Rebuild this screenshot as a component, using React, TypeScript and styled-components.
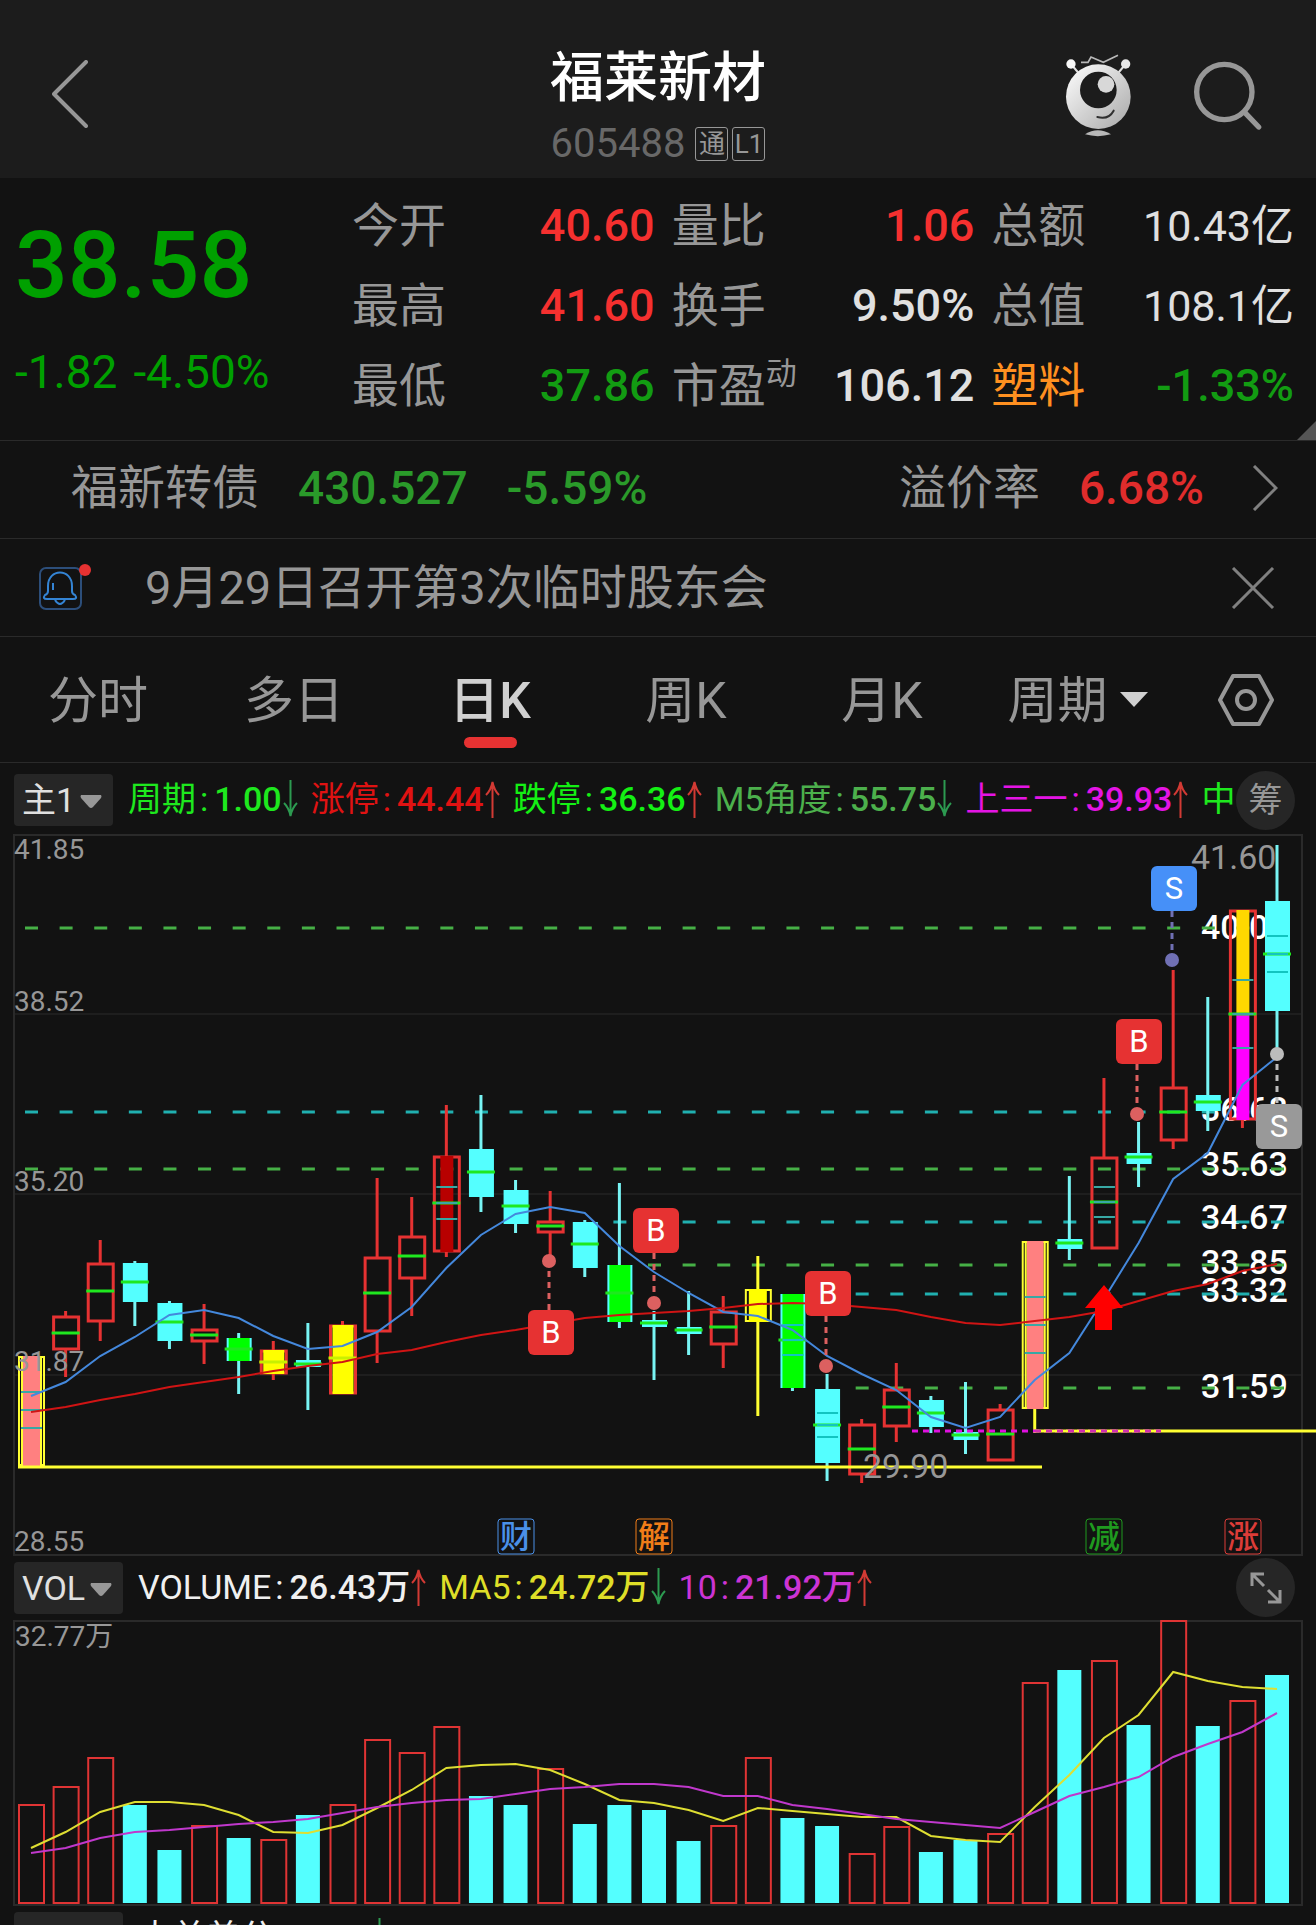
import React from "react";
import styled, { createGlobalStyle } from "styled-components";

const GlobalStyle = createGlobalStyle`
  *, *::before, *::after { box-sizing: border-box; }
  body {
    margin: 0;
    background: #121212;
    color: #e0e0e0;
    font-family: Roboto, "Noto Sans CJK SC", sans-serif;
  }
  h1, p, dl, dd, dt { margin: 0; font-weight: 400; }
  button, select {
    margin: 0;
    padding: 0;
    border: 0;
    background: none;
    color: inherit;
    font: inherit;
    cursor: pointer;
  }
  svg { display: block; }
`;

const color = {
  up: "#f5302f",
  down: "#129c12",
  text: "#e0e0e0",
  muted: "#979797",
  line: "#2a2a2a",
  raised: "#262626",
  accent: "#e63232",
};

/* ---------- page frame ---------- */

const Page = styled.main`
  height: 100vh;
  overflow: hidden;
  background: #121212;
`;

const Header = styled.header`
  display: grid;
  grid-template-columns: 1fr auto 1fr;
  align-items: center;
  height: 178px;
  padding: 14px 52px 0;
  background: #1c1c1c;
`;

const IconButton = styled.button`
  display: inline-flex;
  align-items: center;
  justify-content: center;
  color: ${color.muted};
`;

const HeaderActions = styled.div`
  display: flex;
  align-items: center;
  justify-content: flex-end;
  gap: 58px;
`;

const TitleBlock = styled.div`
  display: flex;
  flex-direction: column;
  align-items: center;
  gap: 14px;
  padding-top: 20px;
`;

const Title = styled.h1`
  font-size: 54px;
  line-height: 62px;
  font-weight: 500;
  color: #fff;
`;

const CodeLine = styled.div`
  display: flex;
  align-items: center;
  gap: 4px;
  height: 40px;
`;

const Code = styled.span`
  margin-right: 6px;
  font-size: 40px;
  line-height: 40px;
  color: #686868;
`;

const Badge = styled.span`
  width: 33px;
  height: 34px;
  border: 1px solid ${color.muted};
  border-radius: 3px;
  font-size: 26px;
  line-height: 32px;
  text-align: center;
  color: ${color.muted};
`;

/* ---------- quote ---------- */

const Quote = styled.section`
  position: relative;
  display: grid;
  grid-template-columns: 337px 1fr;
  height: 263px;
  padding: 8px 22px 0 15px;
  border-bottom: 1px solid ${color.line};
`;

const CornerFold = styled.svg`
  position: absolute;
  right: 0;
  bottom: 0;
  fill: #555;
`;

const PriceBlock = styled.div`
  padding-top: 25px;
  color: #00a000;
`;

const Price = styled.p`
  font-size: 93px;
  line-height: 110px;
  font-weight: 500;
`;

const Change = styled.p`
  display: flex;
  gap: 16px;
  margin-top: 25px;
  font-size: 46px;
  line-height: 52px;
`;

const Stats = styled.dl`
  display: grid;
  grid-template-columns: repeat(3, 1fr);
  grid-auto-rows: 80px;
  column-gap: 17px;
`;

const Stat = styled.div`
  display: flex;
  align-items: center;
  justify-content: space-between;
  height: 80px;
  white-space: nowrap;
`;

const StatLabel = styled.dt<{ $tone?: string }>`
  font-size: 47px;
  line-height: 60px;
  color: ${(p) => p.$tone ?? color.muted};

  sup {
    font-size: 31px;
    line-height: 31px;
    vertical-align: 18px;
  }
`;

const StatValue = styled.dd<{ $tone?: string; $compact?: boolean }>`
  font-size: ${(p) => (p.$compact ? 43 : 45)}px;
  line-height: 60px;
  font-weight: ${(p) => (p.$compact ? 400 : 500)};
  color: ${(p) => p.$tone ?? color.text};
`;

/* ---------- bond and notice rows ---------- */

const InfoRow = styled.section<{ $left: number; $lift?: boolean }>`
  display: flex;
  align-items: center;
  height: 98px;
  padding: 0 38px ${(p) => (p.$lift ? 4 : 0)}px ${(p) => p.$left}px;
  border-bottom: 1px solid ${color.line};
  font-size: 47px;
  line-height: 60px;
  color: ${color.muted};
  white-space: nowrap;
`;

const Figure = styled.span<{ $tone: string }>`
  margin-left: 39px;
  font-size: 46px;
  font-weight: 500;
  color: ${(p) => p.$tone};
`;

const RowEnd = styled.div`
  display: flex;
  align-items: center;
  gap: 48px;
  margin-left: auto;
`;

const NoticeText = styled.span`
  margin-left: 52px;
`;

/* ---------- period tabs ---------- */

const Tabs = styled.nav`
  display: grid;
  grid-template-columns: repeat(6, 1fr) 140px;
  align-items: center;
  justify-items: center;
  height: 126px;
  border-bottom: 1px solid ${color.line};
`;

const Tab = styled.button<{ $active?: boolean }>`
  display: flex;
  flex-direction: column;
  align-items: center;
  height: 96px;
  font-size: 50px;
  line-height: 98px;
  font-weight: ${(p) => (p.$active ? 500 : 400)};
  color: ${(p) => (p.$active ? "#d0d0d0" : color.muted)};

  &::after {
    content: "";
    flex: none;
    width: 53px;
    height: 11px;
    margin-top: -13px;
    border-radius: 6px;
    background: ${(p) => (p.$active ? color.accent : "transparent")};
  }
`;

/* ---------- drop-downs ---------- */

const SelectBox = styled.span<{ $tab?: boolean }>`
  position: relative;
  display: inline-flex;
  flex: none;

  select {
    appearance: none;
    height: ${(p) => (p.$tab ? 66 : 52)}px;
    padding: ${(p) => (p.$tab ? "2px 41px 0 0" : "0 37px 0 8px")};
    border-radius: 4px;
    background: ${(p) => (p.$tab ? "transparent" : color.raised)};
    font-size: ${(p) => (p.$tab ? 50 : 34)}px;
    line-height: ${(p) => (p.$tab ? 64 : 48)}px;
    color: ${(p) => (p.$tab ? color.muted : color.text)};
  }

  svg {
    position: absolute;
    right: ${(p) => (p.$tab ? 1 : 11)}px;
    top: 50%;
    margin-top: ${(p) => (p.$tab ? -8 : -5)}px;
    pointer-events: none;
  }
`;

function Dropdown({ label, value, tab }: { label: string; value: string; tab?: boolean }) {
  return (
    <SelectBox $tab={tab}>
      <select aria-label={label} defaultValue={value}>
        <option value={value}>{value}</option>
      </select>
      {tab ? (
        <svg width="28" height="15" viewBox="0 0 28 15" fill="#d0d0d0">
          <path d="M0 0H28L14 15Z" />
        </svg>
      ) : (
        <svg width="22" height="14" viewBox="0 0 22 14" fill="#979797">
          <path d="M1 0H21Q22 1 21 3L13 12Q11 14 9 12L1 3Q0 1 1 0Z" />
        </svg>
      )}
    </SelectBox>
  );
}

/* ---------- indicator readouts ---------- */

const IndicatorRow = styled.div<{ $height: number; $drop?: number; $lift?: number }>`
  display: flex;
  align-items: center;
  height: ${(p) => p.$height}px;
  padding: ${(p) => p.$drop ?? 0}px 21px ${(p) => p.$lift ?? 0}px 14px;
`;

const Readouts = styled.div`
  display: flex;
  flex: 1;
  min-width: 0;
  gap: 13px;
  margin-left: 15px;
  padding-bottom: 2px;
  overflow: hidden;
  white-space: nowrap;
`;

const Readout = styled.span<{ $tone: string }>`
  display: inline-flex;
  flex: none;
  align-items: center;
  font-size: 34px;
  line-height: 48px;
  color: ${(p) => p.$tone};

  i {
    margin-left: 4px;
    font-style: normal;
  }

  b {
    margin-left: 6px;
    font-weight: 500;
  }

  svg {
    margin-left: 1px;
  }
`;

const RoundButton = styled.button`
  display: flex;
  flex: none;
  align-items: center;
  justify-content: center;
  width: 59px;
  height: 59px;
  border-radius: 50%;
  background: ${color.raised};
  font-size: 34px;
  line-height: 59px;
  color: ${color.muted};
`;

type Reading = { name: string; value?: string; tone: string; dir?: "up" | "down" };

function Arrow({ dir }: { dir: "up" | "down" }) {
  return (
    <svg width="15" height="38" viewBox="0 0 15 38" fill="none" strokeWidth="2" stroke={dir === "up" ? "#d23a34" : "#2c9a50"}>
      {dir === "up" ? <path d="M7.500 38V2M1 15Q6 10 7.500 2Q9 10 14 15" /> : <path d="M7.500 0V36M1 23Q6 28 7.500 36Q9 28 14 23" />}
    </svg>
  );
}

function ReadoutList({ items }: { items: Reading[] }) {
  return (
    <Readouts>
      {items.map((r) => (
        <Readout key={r.name} $tone={r.tone}>
          {r.name}
          {r.value && <i>:</i>}
          {r.value && <b>{r.value}</b>}
          {r.dir && <Arrow dir={r.dir} />}
        </Readout>
      ))}
    </Readouts>
  );
}

/* ---------- charts ---------- */

const Chart = styled.svg`
  width: 100%;
  height: auto;
  overflow: visible;

  text {
    font-family: Roboto, "Noto Sans CJK SC", sans-serif;
  }
`;

const AxisText = styled.text`
  font-size: 28px;
  fill: #979797;
`;

const PriceTag = styled.text`
  font-size: 34px;
  font-weight: 500;
  fill: #fff;
`;

const ExtremeText = styled.text`
  font-size: 34px;
  fill: #979797;
`;

const STEP = 1246 / 36;
const cx = (i: number) => 31 + i * STEP;

const RED = "#e63232";
const CYAN = "#54ffff";
const TEAL = "#20b0b0";
const GREEN = "#46b046";
const LIME = "#1fe81f";

type Kind = "red" | "cyan" | "lime" | "gold" | "dark" | "pink" | "yellow" | "dual";
type Candle = [Kind, number, number, number, number, number, number?];

/* kind, high, body top, body bottom, low, middle, spacing of the quarter marks */
const candles: Candle[] = [
  ["pink", 522, 522, 632, 632, 576, 18],
  ["red", 477, 482, 516, 543, 499],
  ["red", 406, 429, 488, 507, 457],
  ["cyan", 427, 429, 468, 492, 448],
  ["cyan", 467, 469, 507, 515, 488],
  ["red", 470, 495, 508, 530, 501],
  ["lime", 499, 504, 527, 560, 515],
  ["gold", 507, 516, 540, 546, 528],
  ["cyan", 489, 526, 533, 576, 530],
  ["gold", 487, 491, 560, 560, 524],
  ["red", 344, 423, 498, 529, 459],
  ["red", 363, 402, 445, 482, 422],
  ["dark", 271, 322, 418, 423, 369, 16],
  ["cyan", 261, 315, 363, 378, 338],
  ["cyan", 346, 356, 390, 399, 372],
  ["red", 357, 387, 399, 422, 392],
  ["cyan", 386, 388, 434, 443, 410],
  ["lime", 349, 431, 488, 494, 459],
  ["cyan", 477, 486, 493, 546, 489],
  ["cyan", 457, 493, 500, 521, 496],
  ["red", 462, 477, 511, 534, 493],
  ["yellow", 422, 455, 488, 582, 471],
  ["lime", 460, 460, 554, 557, 506, 15],
  ["cyan", 540, 555, 629, 647, 591, 12],
  ["red", 585, 590, 641, 649, 615],
  ["red", 529, 555, 593, 608, 573],
  ["cyan", 562, 566, 593, 599, 579],
  ["cyan", 548, 598, 606, 620, 601],
  ["red", 570, 575, 627, 627, 600],
  ["pink", 407, 407, 575, 599, 491, 28],
  ["cyan", 342, 405, 415, 426, 409],
  ["red", 244, 323, 415, 415, 368, 15],
  ["cyan", 288, 319, 330, 353, 323],
  ["red", 136, 253, 307, 315, 278],
  ["cyan", 163, 261, 277, 297, 268],
  ["dual", 77, 76, 286, 294, 180, 34],
  ["cyan", 11, 67, 177, 214, 120, 18],
];

const fastLine = [
  562, 548, 522, 503, 481, 476, 484, 502, 515, 512, 498, 473, 434, 401, 380, 373, 379, 412, 438, 459, 478, 482, 496, 522,
  540, 556, 583, 594, 583, 546, 519, 465, 409, 345, 319, 251, 223,
];
const slowLine = [
  578, 573, 566, 560, 553, 548, 543, 537, 532, 528, 520, 516, 508, 501, 496, 490, 484, 481, 479, 477, 474, 470, 469, 470,
  473, 476, 483, 489, 491, 487, 483, 477, 467, 457, 450, 437, 430,
];

const levels = [
  { y: 94, from: 0, tone: GREEN, label: "40.05", base: 105 },
  { y: 278, from: 0, tone: TEAL, label: "36.68", base: 287 },
  { y: 335, from: 0, tone: GREEN, label: "35.63", base: 342 },
  { y: 388, from: 17, tone: TEAL, label: "34.67", base: 395 },
  { y: 431, from: 18, tone: GREEN, label: "33.85", base: 440 },
  { y: 460, from: 23, tone: TEAL, label: "33.32", base: 468 },
  { y: 554, from: 24, tone: GREEN, label: "31.59", base: 564 },
];

const points = (ys: number[]) => ys.map((y, i) => `${cx(i)},${y}`).join(" ");

function CandleShape({ c, i }: { c: Candle; i: number }) {
  const [kind, high, top, bottom, low, mid, quarter] = c;
  const x = cx(i);
  const h = bottom - top;
  const yellowish = kind === "pink" || kind === "yellow";
  const cool = kind === "cyan" || kind === "lime";
  const edge = yellowish ? "#ffff32" : cool ? CYAN : RED;
  return (
    <g>
      <path d={`M${x} ${high}V${top}M${x} ${bottom}V${low}`} stroke={cool ? "#78f4f4" : edge} strokeWidth="3" />
      {cool && <rect x={x - 12} y={top} width="25" height={h} fill={CYAN} />}
      {!cool && <rect x={x - 12} y={top + 1} width="25" height={h - 2} fill="none" stroke={edge} strokeWidth={yellowish ? 2 : 3} />}
      {kind === "lime" && <rect x={x - 10} y={top} width="21" height={h} fill="#00ff00" />}
      {kind === "gold" && <rect x={x - 10} y={top} width="21" height={h} fill="#ffff00" />}
      {kind === "dark" && <rect x={x - 6} y={top} width="13" height={h} fill="#b80000" />}
      {kind === "pink" && (
        <>
          <rect x={x - 8} y={top} width="17" height={h} fill="#ff8080" />
          <path d={`M${x - 9} ${top}V${bottom}M${x + 10} ${top}V${bottom}`} stroke="#ffff32" strokeWidth="2" />
        </>
      )}
      {kind === "yellow" && <rect x={x - 9} y={top} width="18" height={h} fill="#ffff00" />}
      {kind === "dual" && (
        <>
          <rect x={x - 6} y={top} width="13" height={mid - top} fill="#ffd800" />
          <rect x={x - 6} y={mid} width="13" height={bottom - mid} fill="#ff00ff" />
        </>
      )}
      {!yellowish && <path d={`M${x - 14} ${mid}H${x + 14}`} stroke={kind === "gold" ? "#c8f000" : LIME} strokeWidth="3" />}
      {quarter && (
        <path
          d={`M${x - 10} ${mid - quarter}h21M${x - 10} ${mid}h21M${x - 10} ${mid + quarter}h21`}
          stroke={cool ? "#12c4c0" : "#38a8a4"}
          strokeWidth="2"
        />
      )}
    </g>
  );
}

type MarkerProps = { x: number; y: number; dot: number; letter: string; fill: string; soft: string };

/* x, y: corner of the flag; dot: height of the traded price */
function Marker({ x, y, dot, letter, fill, soft }: MarkerProps) {
  const below = y > dot;
  return (
    <g>
      <path d={below ? `M${x + 21} ${dot + 10}V${y}` : `M${x + 21} ${y + 45}V${dot - 7}`} stroke={soft} strokeWidth="3" strokeDasharray="6 5" />
      <circle cx={x + 21} cy={dot} r="7" fill={soft} />
      <rect x={x} y={y} width="46" height="45" rx="6" fill={fill} />
      <text x={x + 23} y={y + 33} fontSize="31" textAnchor="middle" fill="#fff">
        {letter}
      </text>
    </g>
  );
}

const markers: MarkerProps[] = [
  { x: 528, y: 476, dot: 427, letter: "B", fill: RED, soft: "#dc6060" },
  { x: 633, y: 374, dot: 469, letter: "B", fill: RED, soft: "#dc6060" },
  { x: 805, y: 437, dot: 532, letter: "B", fill: RED, soft: "#dc6060" },
  { x: 1116, y: 185, dot: 280, letter: "B", fill: RED, soft: "#dc6060" },
  { x: 1151, y: 32, dot: 126, letter: "S", fill: "#4690f8", soft: "#7070b4" },
  { x: 1256, y: 270, dot: 220, letter: "S", fill: "#999999", soft: "#bcbcbc" },
];

const events = [
  { x: 498, text: "财", tone: "#4a90e8" },
  { x: 636, text: "解", tone: "#f07d18" },
  { x: 1086, text: "减", tone: "#1f9a1f" },
  { x: 1225, text: "涨", tone: "#dc3c38" },
];

function PriceChart() {
  return (
    <Chart viewBox="0 0 1316 722" role="img" aria-label="日K线图">
      <path d="M14 1H1302V721H14Z" fill="none" stroke={color.line} strokeWidth="2" />
      <path d="M14 180H1302M14 360H1302M14 541H1302" stroke={color.line} />
      {levels.map((l) => (
        <PriceTag key={l.label} x="1201" y={l.base}>
          {l.label}
        </PriceTag>
      ))}
      {levels.map((l) => (
        <path
          key={l.label}
          d={`M${cx(l.from) - 6} ${l.y}H${cx(36) + 7}`}
          stroke={l.tone}
          strokeWidth="3"
          strokeDasharray={`13 ${STEP - 13}`}
        />
      ))}
      {candles.map((c, i) => (
        <CandleShape key={i} c={c} i={i} />
      ))}
      <path d="M912 597H1161" stroke="#e010e0" strokeWidth="3" strokeDasharray="6 5" />
      <path d="M18 633H1042" stroke="#ffff32" strokeWidth="3" />
      <path d="M1035 597H1316" stroke="#ffff32" strokeWidth="3" />
      <path d="M1035 597H1161" stroke="#d030b0" strokeWidth="3" strokeDasharray="6 5" />
      <polyline points={points(fastLine)} fill="none" stroke="#4488dc" strokeWidth="2" />
      <polyline points={points(slowLine)} fill="none" stroke="#d01414" strokeWidth="2" />
      <path d="M1104 451L1123 474H1112V496H1095V474H1085Z" fill="#ff0000" />
      <AxisText x="14" y="25">41.85</AxisText>
      <AxisText x="14" y="177">38.52</AxisText>
      <AxisText x="14" y="357">35.20</AxisText>
      <AxisText x="14" y="537">31.87</AxisText>
      <AxisText x="14" y="717">28.55</AxisText>
      <ExtremeText x="1191" y="35">41.60</ExtremeText>
      <ExtremeText x="863" y="644">29.90</ExtremeText>
      {markers.map((m) => (
        <Marker key={m.x} {...m} />
      ))}
      {events.map((e) => (
        <g key={e.text}>
          <rect x={e.x} y="685" width="36" height="35" rx="3" fill="none" stroke={e.tone} />
          <text x={e.x + 18} y="714" fontSize="32" fontWeight="500" textAnchor="middle" fill={e.tone}>
            {e.text}
          </text>
        </g>
      ))}
    </Chart>
  );
}

/* bar tops; rising days are outlined, falling days are filled */
const volumes: [string, number][] = [
  ["r", 184], ["r", 166], ["r", 137], ["c", 184], ["c", 229], ["r", 205], ["c", 217], ["r", 219], ["c", 194],
  ["r", 184], ["r", 119], ["r", 132], ["r", 106], ["c", 175], ["c", 184], ["r", 148], ["c", 203], ["c", 184],
  ["c", 189], ["c", 220], ["r", 205], ["r", 137], ["c", 197], ["c", 205], ["r", 233], ["r", 206], ["c", 231],
  ["c", 219], ["r", 213], ["r", 62], ["c", 49], ["r", 40], ["c", 104], ["r", 0], ["c", 105], ["r", 80], ["c", 54],
];
const volumeFast = [
  227, 211, 191, 181, 181, 184, 194, 211, 212, 204, 187, 169, 147, 144, 143, 149, 163, 179, 182, 189, 200, 187, 190, 193,
  196, 196, 215, 219, 221, 186, 154, 117, 94, 51, 60, 66, 68,
];
const volumeSlow = [
  232, 227, 217, 211, 209, 206, 203, 201, 198, 192, 186, 182, 179, 178, 173, 168, 166, 163, 163, 166, 175, 175, 184, 188,
  193, 198, 201, 204, 207, 191, 175, 166, 156, 136, 123, 111, 92,
];

function VolumeChart() {
  return (
    <Chart viewBox="0 0 1316 285" role="img" aria-label="成交量">
      <path d="M14 0H1302V284H14Z" fill="none" stroke={color.line} strokeWidth="2" />
      {volumes.map(([kind, top], i) =>
        kind === "r" ? (
          <rect key={i} x={cx(i) - 12} y={top} width="25" height={282 - top} fill="none" stroke="#e03434" strokeWidth="2" />
        ) : (
          <rect key={i} x={cx(i) - 12} y={top} width="24" height={282 - top} fill={CYAN} />
        ),
      )}
      <polyline points={points(volumeFast)} fill="none" stroke="#dede32" strokeWidth="2" />
      <polyline points={points(volumeSlow)} fill="none" stroke="#c038cc" strokeWidth="2" />
      <AxisText x="15" y="25">32.77万</AxisText>
    </Chart>
  );
}

/* ---------- data ---------- */

type StatItem = { label: React.ReactNode; value: string; tone?: string; labelTone?: string; compact?: boolean };

const stats: StatItem[] = [
  { label: "今开", value: "40.60", tone: color.up },
  { label: "量比", value: "1.06", tone: color.up },
  { label: "总额", value: "10.43亿", compact: true },
  { label: "最高", value: "41.60", tone: color.up },
  { label: "换手", value: "9.50%" },
  { label: "总值", value: "108.1亿", compact: true },
  { label: "最低", value: "37.86", tone: color.down },
  { label: <>市盈<sup>动</sup></>, value: "106.12" },
  { label: "塑料", value: "-1.33%", tone: color.down, labelTone: "#ff9020" },
];

const mainReadings: Reading[] = [
  { name: "周期", value: "1.00", tone: "#1ee81e", dir: "down" },
  { name: "涨停", value: "44.44", tone: "#e01212", dir: "up" },
  { name: "跌停", value: "36.36", tone: "#14f014", dir: "up" },
  { name: "M5角度", value: "55.75", tone: "#4cb04c", dir: "down" },
  { name: "上三一", value: "39.93", tone: "#e414e4", dir: "up" },
  { name: "中", tone: "#1ee81e" },
];

const volumeReadings: Reading[] = [
  { name: "VOLUME", value: "26.43万", tone: "#f0f0f0", dir: "up" },
  { name: "MA5", value: "24.72万", tone: "#dede28", dir: "down" },
  { name: "10", value: "21.92万", tone: "#cc34d4", dir: "up" },
];

/* ---------- app ---------- */

export default function App() {
  return (
    <Page>
      <GlobalStyle />
      <Header>
        <div>
          <IconButton type="button" aria-label="返回">
            <svg width="36" height="68" viewBox="0 0 36 68" fill="none" stroke="currentColor" strokeWidth="4" strokeLinecap="round" strokeLinejoin="round">
              <path d="M34 2L2 34L34 66" />
            </svg>
          </IconButton>
        </div>
        <TitleBlock>
          <Title>福莱新材</Title>
          <CodeLine>
            <Code>605488</Code>
            <Badge>通</Badge>
            <Badge>L1</Badge>
          </CodeLine>
        </TitleBlock>
        <HeaderActions>
          <IconButton type="button" aria-label="智能助手">
            <svg width="72" height="88" viewBox="66 36 216 264">
              <defs>
                <linearGradient id="head" x1="0" y1="0" x2="1" y2="1">
                  <stop offset="0.1" stopColor="#f6f6f6" />
                  <stop offset="1" stopColor="#a8a8a8" />
                </linearGradient>
              </defs>
              <path d="M93 72L118 102M257 72L232 102" stroke="#e0e0e0" strokeWidth="6" />
              <circle cx="93" cy="72" r="14" fill="#f8f8f8" />
              <circle cx="257" cy="72" r="14" fill="#e8e8e8" />
              <path d="M123 67H144L153 51L190 67L234 46" fill="none" stroke="#b8b8b8" strokeWidth="5" />
              <circle cx="175" cy="170" r="97" fill="url(#head)" />
              <circle cx="175" cy="150" r="55" fill="#1c1c1c" />
              <circle cx="198" cy="133" r="25" fill="#d8d8d8" />
              <path d="M172 231Q206 240 221 212" fill="none" stroke="#303030" strokeWidth="6" strokeLinecap="round" />
              <path d="M135 283Q173 258 213 283Q173 294 135 283Z" fill="#b8b8b8" />
            </svg>
          </IconButton>
          <IconButton type="button" aria-label="搜索">
            <svg width="72" height="72" viewBox="456 60 216 216" fill="none" stroke="currentColor" strokeWidth="16" strokeLinecap="round">
              <circle cx="553" cy="156" r="83" />
              <path d="M614 217L656 261" />
            </svg>
          </IconButton>
        </HeaderActions>
      </Header>

      <Quote>
        <PriceBlock>
          <Price>38.58</Price>
          <Change>
            <span>-1.82</span>
            <span>-4.50%</span>
          </Change>
        </PriceBlock>
        <Stats>
          {stats.map((s, i) => (
            <Stat key={i}>
              <StatLabel $tone={s.labelTone}>{s.label}</StatLabel>
              <StatValue $tone={s.tone} $compact={s.compact}>
                {s.value}
              </StatValue>
            </Stat>
          ))}
        </Stats>
        <CornerFold width="19" height="19" viewBox="0 0 19 19" aria-hidden="true">
          <path d="M19 0V19H0Z" />
        </CornerFold>
      </Quote>

      <InfoRow $left={71} $lift>
        <span>福新转债</span>
        <Figure $tone="#2a9a2a">430.527</Figure>
        <Figure $tone="#2a9a2a">-5.59%</Figure>
        <RowEnd>
          <span>
            溢价率
            <Figure $tone="#e02c2c">6.68%</Figure>
          </span>
          <IconButton type="button" aria-label="查看转债">
            <svg width="26" height="46" viewBox="0 0 26 46" fill="none" stroke="#808080" strokeWidth="3">
              <path d="M2 1L24 23L2 45" />
            </svg>
          </IconButton>
        </RowEnd>
      </InfoRow>

      <InfoRow $left={39}>
        <svg width="54" height="48" viewBox="0 0 54 48" fill="none">
          <rect x="1" y="4" width="41" height="41" rx="6" stroke="#2c4e7a" strokeWidth="2" />
          <path d="M9 27V22C9 4 33 4 33 22V27Q33 30 36 31Q39 35 34 35H8Q3 35 6 31Q9 30 9 27Z" stroke="#3484d4" strokeWidth="2" />
          <path d="M14 19V26M16 36Q21 44 26 36" stroke="#3484d4" strokeWidth="2" />
          <circle cx="46" cy="6" r="6" fill={color.accent} />
        </svg>
        <NoticeText>9月29日召开第3次临时股东会</NoticeText>
        <RowEnd>
          <IconButton type="button" aria-label="关闭">
            <svg width="48" height="42" viewBox="0 0 48 42" stroke="#808080" strokeWidth="3">
              <path d="M3 1L43 41M43 1L3 41" />
            </svg>
          </IconButton>
        </RowEnd>
      </InfoRow>

      <Tabs>
        <Tab type="button">分时</Tab>
        <Tab type="button">多日</Tab>
        <Tab type="button" $active>
          日K
        </Tab>
        <Tab type="button">周K</Tab>
        <Tab type="button">月K</Tab>
        <Dropdown label="选择周期" value="周期" tab />
        <IconButton type="button" aria-label="设置">
          <svg width="58" height="54" viewBox="0 0 58 54" fill="none" stroke="currentColor" strokeWidth="4" strokeLinejoin="round">
            <path d="M16 3H42L55 27L42 51H16L3 27Z" />
            <circle cx="29" cy="27" r="9" />
          </svg>
        </IconButton>
      </Tabs>

      <IndicatorRow $height={71} $drop={3}>
        <Dropdown label="主图指标" value="主1" />
        <ReadoutList items={mainReadings} />
        <RoundButton type="button">筹</RoundButton>
      </IndicatorRow>
      <PriceChart />

      <IndicatorRow $height={65} $lift={2}>
        <Dropdown label="副图指标一" value="VOL" />
        <ReadoutList items={volumeReadings} />
        <RoundButton type="button" aria-label="全屏">
          <svg width="32" height="38" viewBox="0 0 32 38" fill="none" stroke="currentColor" strokeWidth="3">
            <path d="M2 17V5H14M2 5L14 17M30 21V33H18M30 33L18 21" />
          </svg>
        </RoundButton>
      </IndicatorRow>
      <VolumeChart />

      <IndicatorRow $height={64}>
        <Dropdown label="副图指标二" value="DDE" />
        <ReadoutList items={[{ name: "大单差分", value: "-0.10", tone: "#f0f0f0", dir: "down" }]} />
      </IndicatorRow>
    </Page>
  );
}
